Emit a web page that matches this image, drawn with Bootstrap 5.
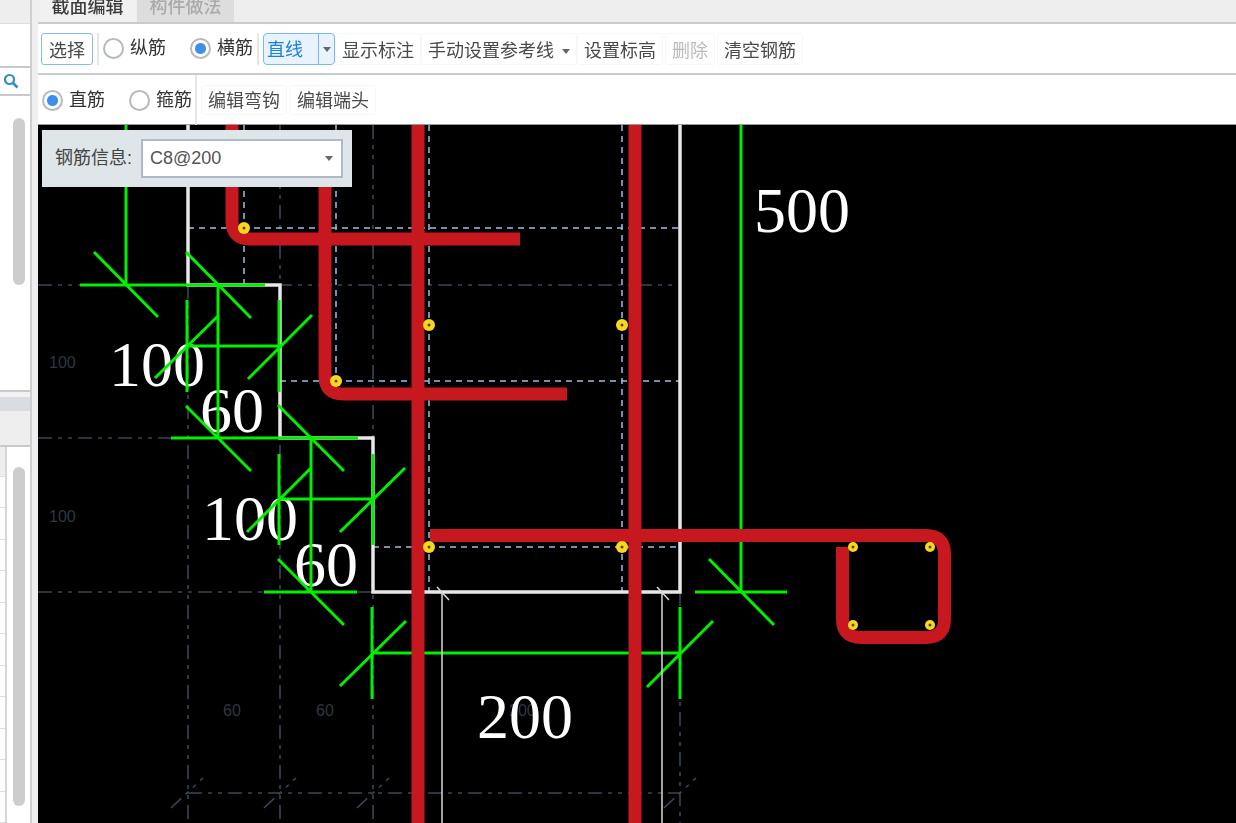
<!DOCTYPE html>
<html>
<head>
    <meta charset="utf-8">
    <title>截面编辑</title>
    <link href="https://cdn.jsdelivr.net/npm/bootstrap@5.3.0/dist/css/bootstrap.min.css" rel="stylesheet">
    <script src="https://cdn.jsdelivr.net/npm/bootstrap@5.3.0/dist/js/bootstrap.bundle.min.js"></script>
    <style>
        html, body { height: 823px; overflow: hidden; }
        body { font-family: "Liberation Sans", "Noto Sans CJK SC", sans-serif; color: #444; background: #eee; }

        /* left strip */
        .side { width: 38px; background: #efefef; }
        .side-in { width: 32px; border-right: 2px solid #cfcfcf; background: #fff; height: 823px; }
        .side-tab { height: 24px; background: #eee; border-bottom: 1px solid #ddd; }
        .side-blank { height: 42px; }
        .side-search { height: 30px; border-top: 2px solid #c9c9c9; border-bottom: 2px solid #c9c9c9; padding-left: 3px; }
        .side-list { height: 296px; padding: 22px 5px 0 13px; border-bottom: 2px solid #c9c9c9; }
        .side-gap { height: 5px; background: #f2f2f2; }
        .side-head { height: 14px; background: #d9dce1; }
        .side-tools { height: 36px; background: #eee; border-bottom: 2px solid #c9c9c9; }
        .side-rows { width: 7px; border-right: 2px solid #d6d6d6; }
        .side-row { height: 31.5px; border-bottom: 1px solid #ddd; background: #fff; }
        .side-row:first-child { background: #eee; height: 30px; }
        .side-scroll { padding: 20px 5px 0 6px; }
        .thumb { width: 12px; background: #cdcdcd; border-radius: 6px; }
        .thumb-a { height: 167px; }
        .thumb-b { height: 339px; }

        /* tabs */
        .tabbar { height: 24px; background: #eee; border-bottom: 2px solid #c8ccd0; }
        .sec-tab { width: 97px; height: 22px; margin-left: 1px; font-size: 18px; line-height: 14px; text-align: center; overflow: hidden; font-weight: 500; color: #3c3c3c; background: #f1f1f1; filter: blur(.35px); }
        .sec-tab-off { color: #aaa; background: #ddd; margin-left: 1px; }

        /* toolbars */
        .bar { background: #fff; font-size: 18px; line-height: 26px; }
        .bar-in { filter: blur(.35px); }
        .bar-a { height: 51px; padding: 9px 0 0 3px; border-bottom: 2px solid #c8ccd0; }
        .bar-b { height: 50px; padding: 10px 0 0 4px; border-bottom: 1px solid #999; }
        .tool { --bs-btn-font-size: 18px; --bs-btn-line-height: 26px; --bs-btn-color: #4a4a4a; --bs-btn-hover-color: #4a4a4a; --bs-btn-border-color: #f7f7f7; --bs-btn-hover-border-color: #f7f7f7; --bs-btn-disabled-border-color: #f7f7f7; --bs-btn-disabled-color: #bbb; --bs-btn-disabled-opacity: 1; --bs-btn-border-radius: 3px; --bs-btn-padding-x: 6px; --bs-btn-padding-y: 2px; white-space: nowrap; }
        .tool-on { --bs-btn-border-color: #85bdf2; --bs-btn-hover-border-color: #85bdf2; --bs-btn-padding-x: 7px; }
        .tool-h { height: 32px; padding-top: 4px; padding-bottom: 0; }
        .tool-s { height: 30px; }
        .lbl { color: #333; }
        .gap-kind { margin-left: 24px; }
        .gap-tool { margin-left: 2px; }
        .gap-tool-b { margin-left: 3px; }
        .sep { width: 2px; height: 32px; background: #e6e6e6; }
        .sep-b { height: 50px; margin: -10px 4px 0 3px; }
        .pick { height: 32px; border: 1px solid #7ab8f0; border-radius: 4px; background: #e8f3fe; color: #1c7fe0; width: 72px; }
        .pick-txt { width: 55px; padding: 3px 0 0 3px; border-right: 1px solid #7ab8f0; }
        .pick-arrow { flex: 1 1 auto; }
        .caret-d { width: 0; height: 0; border-left: 4px solid transparent; border-right: 4px solid transparent; border-top: 5px solid #666; }
        .tool .caret-d { display: inline-block; margin: 0 0 3px 8px; }
        .rd { appearance: none; width: 21px; height: 21px; border: 2px solid #b9b9b9; border-radius: 50%; background: #fff; margin: 0 6px 0 0; flex: none; }
        .rd:checked { background: radial-gradient(circle, #3d8fee 0 5px, #fff 6px); }

        /* drawing */
        .canvas { background: #000; height: 698px; }
        .canvas svg { display: block; }
        .info { left: 4px; top: 5px; width: 310px; height: 57px; background: #dfe6e9; padding: 0 9px 0 13px; font-size: 18px; color: #444; }
        .info-sel { width: 202px; height: 39px; background: #fff; border: 2px solid #b0b8ca; padding: 0 8px 0 7px; color: #555; font-size: 18px; }
        .gl { stroke: #3a4656; stroke-width: 1.6; stroke-dasharray: 14 6 4 6 4 6; fill: none; }
        .bl { stroke: #9cc0e4; stroke-width: 1.5; stroke-dasharray: 6 5; fill: none; }
        .wl { stroke: #e8e8e8; stroke-width: 3.5; fill: none; }
        .dim { stroke: #00f000; stroke-width: 3; fill: none; }
        .rb { stroke: #c8181f; stroke-width: 13; fill: none; }
        .big { font-family: "Liberation Serif", serif; font-size: 64px; fill: #fff; }
        .dimtxt { font-family: "Liberation Sans", sans-serif; font-size: 16px; fill: #2f3641; }
        .ann { stroke: #d8d8d8; stroke-width: 1.5; fill: none; }
        .pt { fill: #f8d81f; }
        .pt-c { fill: #5a4a10; }
    </style>
</head>
<body class="d-flex">

<div class="side flex-shrink-0">
    <div class="side-in d-flex flex-column">
        <div class="side-tab"></div>
        <div class="side-blank"></div>
        <div class="side-search d-flex align-items-center">
            <svg width="16" height="16" viewBox="0 0 16 16"><circle cx="6.5" cy="6.5" r="4.5" fill="none" stroke="#2f8fc4" stroke-width="2.2"/><path d="M10 10l4.500 4.500" stroke="#2f8fc4" stroke-width="2.600"/></svg>
        </div>
        <div class="side-list"><div class="thumb thumb-a"></div></div>
        <div class="side-gap"></div>
        <div class="side-head"></div>
        <div class="side-tools"></div>
        <div class="d-flex flex-grow-1">
            <div class="side-rows">
                <div class="side-row"></div><div class="side-row"></div><div class="side-row"></div>
                <div class="side-row"></div><div class="side-row"></div><div class="side-row"></div>
                <div class="side-row"></div><div class="side-row"></div><div class="side-row"></div>
                <div class="side-row"></div><div class="side-row"></div><div class="side-row"></div>
            </div>
            <div class="side-scroll"><div class="thumb thumb-b"></div></div>
        </div>
    </div>
</div>

<div class="flex-grow-1 d-flex flex-column">
    <div class="tabbar d-flex">
        <div class="sec-tab">截面编辑</div>
        <div class="sec-tab sec-tab-off">构件做法</div>
    </div>

    <div class="bar bar-a">
        <div class="bar-in d-flex align-items-start">
            <button class="btn tool tool-on tool-h" type="button">选择</button>
            <div class="sep ms-1 me-1"></div>
            <label class="d-flex align-items-center tool-s lbl"><input class="rd" type="radio" name="kind"><span>纵筋</span></label>
            <label class="d-flex align-items-center tool-s lbl gap-kind"><input class="rd" type="radio" name="kind" checked><span>横筋</span></label>
            <div class="sep ms-1 me-1"></div>
            <div class="pick d-flex">
                <div class="pick-txt">直线</div>
                <div class="pick-arrow d-flex align-items-center justify-content-center"><span class="caret-d"></span></div>
            </div>
            <button class="btn tool tool-h" type="button">显示标注</button>
            <button class="btn tool tool-h" type="button">手动设置参考线<span class="caret-d"></span></button>
            <button class="btn tool tool-h" type="button">设置标高</button>
            <button class="btn tool tool-h gap-tool" type="button" disabled>删除</button>
            <button class="btn tool tool-h gap-tool" type="button">清空钢筋</button>
        </div>
    </div>

    <div class="bar bar-b">
        <div class="bar-in d-flex align-items-start">
            <label class="d-flex align-items-center tool-s lbl"><input class="rd" type="radio" name="shape" checked><span>直筋</span></label>
            <label class="d-flex align-items-center tool-s lbl gap-kind"><input class="rd" type="radio" name="shape"><span>箍筋</span></label>
            <div class="sep sep-b"></div>
            <button class="btn tool tool-s" type="button">编辑弯钩</button>
            <button class="btn tool tool-s gap-tool-b" type="button">编辑端头</button>
        </div>
    </div>

    <div class="canvas position-relative">
        <svg width="1198" height="698" viewBox="38 125 1198 698">
            <!-- axis grid -->
            <path class="gl" d="M188 285V823M280 125V823M373 125V823M680 592V823M38 285H680M38 438H373M38 592H373M188 793H680"/>
            <path class="gl" d="M171 808L203 778M264 808L296 778M357 808L389 778M664 808L696 778"/>
            <!-- offset lines -->
            <path class="bl" d="M188 228H680M280 381H680M373 547H680M244 125V285M336 125V381M429 125V592M622 125V592"/>
            <!-- section outline -->
            <path class="wl" d="M188 125V285H280V438H373V592H680V125"/>
            <text class="dimtxt" x="49" y="368">100</text>
            <text class="dimtxt" x="49" y="522">100</text>
            <text class="dimtxt" x="223" y="716">60</text>
            <text class="dimtxt" x="316" y="716">60</text>
            <text class="dimtxt" x="509" y="716">200</text>
            <text class="big" x="754" y="232">500</text>
            <text class="big" x="109" y="386">100</text>
            <text class="big" x="200" y="432">60</text>
            <text class="big" x="202" y="540">100</text>
            <text class="big" x="294" y="586">60</text>
            <text class="big" x="477" y="738">200</text>
            <!-- dimension lines -->
            <path class="dim" d="M741 125V592M695 592H787M709 559L774 625"/>
            <path class="dim" d="M126 125V285M80 285H265M94 252L158 317M186 252L251 318"/>
            <path class="dim" d="M218 285V438M187 346H280M187 300V392M279 300V392M155 378L219 315M312 315L248 379"/>
            <path class="dim" d="M171 438H358M186 406L251 471M278 405L344 471"/>
            <path class="dim" d="M311 438V592M280 499H373M279 454V545M373 454V545M405 468L340 532M311 468L247 532"/>
            <path class="dim" d="M264 592H357M278 559L344 625"/>
            <path class="dim" d="M372 607V699M680 607V699M372 653H680M406 621L340 686M713 621L647 687"/>
            <!-- leader lines -->
            <path class="ann" d="M442 592V823M662 592V823M437 587L449 600M657 587L669 600"/>
            <!-- rebar -->
            <path class="rb" d="M232 125V221Q232 239 250 239H520"/>
            <path class="rb" d="M325 150V376Q325 394 343 394H567"/>
            <path class="rb" d="M418 125V823M635 125V823"/>
            <path class="rb" d="M430 535.500H926Q944.500 535.500 944.500 554V619Q944.500 637.500 926 637.500H861Q842.500 637.500 842.500 619V547"/>
            <!-- rebar points -->
            <g>
                <circle class="pt" cx="244" cy="228" r="6"/><circle class="pt-c" cx="244" cy="228" r="1.500"/>
                <circle class="pt" cx="429" cy="325" r="6"/><circle class="pt-c" cx="429" cy="325" r="1.500"/>
                <circle class="pt" cx="622" cy="325" r="6"/><circle class="pt-c" cx="622" cy="325" r="1.500"/>
                <circle class="pt" cx="336" cy="381" r="6"/><circle class="pt-c" cx="336" cy="381" r="1.500"/>
                <circle class="pt" cx="429" cy="547" r="6"/><circle class="pt-c" cx="429" cy="547" r="1.500"/>
                <circle class="pt" cx="622" cy="547" r="6"/><circle class="pt-c" cx="622" cy="547" r="1.500"/>
                <circle class="pt" cx="853" cy="547" r="5"/><circle class="pt-c" cx="853" cy="547" r="1.500"/>
                <circle class="pt" cx="930" cy="547" r="5"/><circle class="pt-c" cx="930" cy="547" r="1.500"/>
                <circle class="pt" cx="853" cy="625" r="5"/><circle class="pt-c" cx="853" cy="625" r="1.500"/>
                <circle class="pt" cx="930" cy="625" r="5"/><circle class="pt-c" cx="930" cy="625" r="1.500"/>
            </g>
        </svg>

        <div class="info position-absolute d-flex align-items-center justify-content-between">
            <span>钢筋信息:</span>
            <div class="info-sel d-flex align-items-center justify-content-between">
                <span>C8@200</span>
                <span class="caret-d"></span>
            </div>
        </div>
    </div>
</div>

</body>
</html>
